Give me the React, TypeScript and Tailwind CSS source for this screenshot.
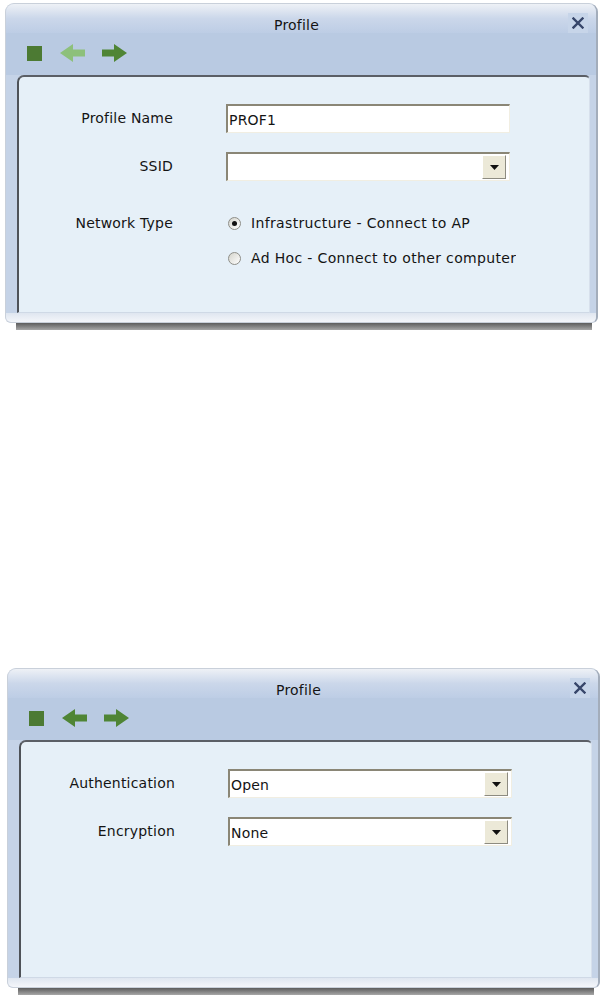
import { type FC, type ReactNode } from 'react'

type Props = {
  backDisabled?: boolean
  children?: ReactNode
  className?: string
}

const Arrow: FC<{ dir: 'left' | 'right'; color: string }> = ({ dir, color }) => (
  <svg width="25" height="18" viewBox="0 0 25 18" className="block">
    <path
      d={dir === 'right' ? 'M0 5.5H12V0L25 9L12 18V12.5H0Z' : 'M25 5.5H13V0L0 9L13 18V12.5H25Z'}
      fill={color}
    />
  </svg>
)

const CloseIcon = () => (
  <div className="w-[20px] h-[20px] bg-[#c7d5e9] flex items-center justify-center">
    <svg width="12" height="12" viewBox="0 0 12 12">
      <path d="M1.5 1.5L10.5 10.5M10.5 1.5L1.5 10.5" stroke="#37466a" strokeWidth="2.4" strokeLinecap="square" />
    </svg>
  </div>
)

const DropButton = () => (
  <div className="w-[24px] h-[24px] bg-[#ece9d8] border border-t-white border-l-white border-r-[#8d8b80] border-b-[#8d8b80] flex items-center justify-center">
    <svg width="9" height="5" viewBox="0 0 9 5">
      <path d="M0 0H9L4.5 5Z" fill="#111" />
    </svg>
  </div>
)

const TextField: FC<{ value?: string; select?: boolean }> = ({ value, select }) => (
  <div className="w-[284px] h-[29px] bg-white border-t-2 border-l-2 border-r border-b border-t-[#8a8676] border-l-[#8a8676] border-r-[#f1eee2] border-b-[#f1eee2] flex items-center justify-between pl-[1px] pr-[3px]">
    <span className="text-[14px] leading-[16px] pt-[1px]">{value}</span>
    {select && <DropButton />}
  </div>
)

const Radio: FC<{ checked?: boolean; label: string }> = ({ checked, label }) => (
  <div className="flex items-center w-[290px] overflow-hidden whitespace-nowrap">
    <div className="ml-[2px] w-[13px] h-[13px] shrink-0 rounded-full border border-[#8e8e88] bg-gradient-to-br from-[#d4d4cc] to-white flex items-center justify-center">
      {checked && <div className="w-[5px] h-[5px] rounded-full bg-[#111]" />}
    </div>
    <span className="ml-[10px] text-[14px] leading-[17px] tracking-[0.35px]">{label}</span>
  </div>
)

const Row: FC<{ label: string; children: ReactNode; className?: string }> = ({ label, children, className }) => (
  <div className={`flex items-center ${className ?? ''}`}>
    <div className="w-[154px] text-right text-[14px] leading-[17px]">{label}</div>
    <div className="ml-[53px]">{children}</div>
  </div>
)

const ProfileDialog: FC<Props> = ({ backDisabled, children, className }) => {
  return (
    <div className={`w-[593px] ${className ?? ''}`}>
      <div className="h-[320px] rounded-t-[9px] rounded-b-[6px] border border-[#c9d0da] border-r-2 border-r-[#a3adbb] bg-[#c5d3e7] flex flex-col overflow-hidden">
        <div className="h-[29px] shrink-0 bg-gradient-to-b from-[#eef1f6] via-[#cbd7ea] to-[#bdcde5] relative">
          <div className="pt-[13px] pr-[9px] text-center text-[14px] leading-[16px]">Profile</div>
          <div className="absolute right-[8px] top-[9px]">
            <CloseIcon />
          </div>
        </div>
        <div className="h-[42px] shrink-0 bg-[#b9cae2] pl-[21px] pt-[11px] flex items-start">
          <div className="flex items-center h-[18px]">
            <div className="w-[15px] h-[15px] bg-[#4c7a33]" />
            <div className="ml-[18px]">
              <Arrow dir="left" color={backDisabled ? '#8dc07b' : '#4f8535'} />
            </div>
            <div className="ml-[17px]">
              <Arrow dir="right" color="#4f8535" />
            </div>
          </div>
        </div>
        <div className="ml-[11px] mr-[6px] h-[238px] shrink-0 rounded-tl-[7px] rounded-tr-[5px] border-t-2 border-l-2 border-r border-b border-t-[#5b5f66] border-l-[#4e5258] border-r-[#d7e0ec] border-b-[#cfd9e6] bg-[#e6f0f8] pt-[27px]">
          {children}
        </div>
        <div className="flex-1 bg-gradient-to-b from-[#dfe6f0] to-[#f4f6fa]" />
      </div>
      <div className="ml-[11px] w-[576px] h-[7px] bg-gradient-to-b from-[#5d5d5d] to-[#a8a8a8]" />
    </div>
  )
}

export default function App() {
  return (
    <div className="w-[610px] h-[997px] bg-white text-[#141414] font-['DejaVu_Sans',sans-serif] tracking-[0.2px] pt-[3px] pl-[5px]">
      <ProfileDialog backDisabled>
        <Row label="Profile Name">
          <TextField value="PROF1" />
        </Row>
        <Row label="SSID" className="mt-[19px]">
          <TextField select />
        </Row>
        <Row label="Network Type" className="mt-[34px]">
          <Radio checked label="Infrastructure - Connect to AP" />
        </Row>
        <div className="mt-[18px] ml-[207px]">
          <Radio label="Ad Hoc - Connect to other computer" />
        </div>
      </ProfileDialog>

      <ProfileDialog className="mt-[338px] ml-[2px]">
        <Row label="Authentication">
          <TextField value="Open" select />
        </Row>
        <Row label="Encryption" className="mt-[19px]">
          <TextField value="None" select />
        </Row>
      </ProfileDialog>
    </div>
  )
}
